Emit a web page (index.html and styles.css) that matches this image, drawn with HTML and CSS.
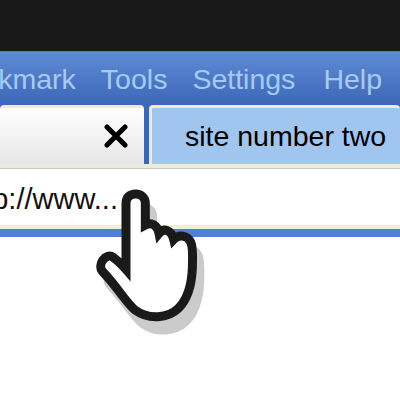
FILE: index.html

```html
<!DOCTYPE html>
<html lang="en">
<head>
  <meta charset="UTF-8" />
  <title>Browser</title>
  <link rel="stylesheet" href="styles.css">
</head>
<body>
  <div class="top"></div>
  <div class="browser">
    <nav class="menu">
      <span>Bookmark</span>
      <span>Tools</span>
      <span>Settings</span>
      <span class="help">Help</span>
    </nav>
    <div class="tabs">
      <div class="tab active">
        <svg class="close" viewBox="0 0 24 24"><path d="M3 3L21 21M21 3L3 21"/></svg>
      </div>
      <div class="tab other">site number two</div>
    </div>
    <div class="address"><span class="url">http://www...</span></div>
    <div class="strip"></div>
  </div>
  <svg class="hand" viewBox="0 0 420 540">
    <path class="shadow" d="M138 298V100C138 82 150 72 167 72C184 72 196 84 196 100V165C215 155 232 165 237 190C252 172 274 180 281 208C296 192 322 196 332 216C340 232 338 260 337 295C335 345 325 385 295 415C265 445 205 450 165 420C140 400 115 355 68 305C50 285 78 245 100 262C115 273 127 285 138 298Z"/>
    <path class="outline" d="M138 298V100C138 82 150 72 167 72C184 72 196 84 196 100V165C215 155 232 165 237 190C252 172 274 180 281 208C296 192 322 196 332 216C340 232 338 260 337 295C335 345 325 385 295 415C265 445 205 450 165 420C140 400 115 355 68 305C50 285 78 245 100 262C115 273 127 285 138 298Z"/>
  </svg>
</body>
</html>
```

FILE: styles.css

```css
html, body {
  margin: 0;
  height: 100%;
  overflow: hidden;
  background: #fff;
  font-family: "Liberation Sans", Arial, sans-serif;
}
.top {
  height: 51px;
  background: #181818;
}
.browser {
  position: relative;
  border-top: 1px solid #4f7ac9;
}
.menu {
  display: flex;
  justify-content: flex-end;
  gap: 25px;
  height: 50px;
  padding: 2px 18px 0 0;
  align-items: center;
  background: linear-gradient(#5f8bd6, #3d67b8);
  color: #a6cbf3;
  font-size: 28.5px;
  white-space: nowrap;
}
.help {
  margin-left: 3px;
}
.tabs {
  display: flex;
  gap: 5px;
  height: 60px;
  padding-top: 1px;
  box-sizing: border-box;
  background: #3d67b8;
}
.tab {
  display: flex;
  align-items: center;
  box-sizing: border-box;
  border-radius: 4px 4px 0 0;
}
.active {
  width: 144px;
  justify-content: flex-end;
  padding-right: 16px;
  border-top: 3px solid #efeadb;
  background: linear-gradient(#fff, #e6e6e6);
}
.other {
  flex: 1;
  padding-left: 33px;
  border: 3px solid #efeadb;
  border-width: 3px 0 0 3px;
  background: #a0c6f0;
  color: #000;
  font-size: 28.5px;
  white-space: nowrap;
}
.close {
  width: 24px;
  height: 24px;
}
.close path {
  fill: none;
  stroke: #000;
  stroke-width: 5;
  stroke-linecap: round;
}
.address {
  display: flex;
  align-items: center;
  height: 52px;
  padding-top: 5px;
  border-top: 4px solid #efeadb;
  box-shadow: inset 0 1px 0 #c9c9c5;
  background: #fff;
  font-size: 29px;
  color: #111;
  white-space: nowrap;
}
.url {
  margin-left: -40px;
}
.strip {
  height: 8px;
  border-top: 4px solid #f1efd6;
  background: #4f7fd6;
}
.hand {
  position: absolute;
  left: 80px;
  top: 170px;
  width: 140px;
  height: 180px;
}
.shadow {
  fill: #cbcbcb;
  stroke: #cbcbcb;
  stroke-width: 27;
  stroke-linejoin: round;
  transform: translate(22px, 40px);
}
.outline {
  fill: #fff;
  stroke: #1a1a1a;
  stroke-width: 27;
  stroke-linejoin: miter;
  stroke-miterlimit: 6;
}
```
